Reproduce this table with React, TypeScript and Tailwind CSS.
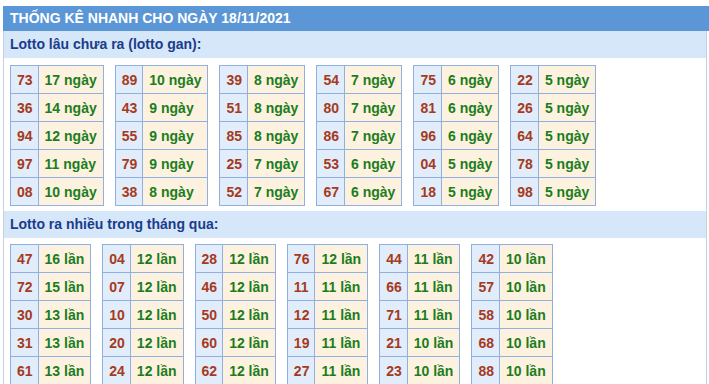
import React from 'react';

type Row = [string, string];

const ganTables: Row[][] = [
  [['73', '17'], ['36', '14'], ['94', '12'], ['97', '11'], ['08', '10']],
  [['89', '10'], ['43', '9'], ['55', '9'], ['79', '9'], ['38', '8']],
  [['39', '8'], ['51', '8'], ['85', '8'], ['25', '7'], ['52', '7']],
  [['54', '7'], ['80', '7'], ['86', '7'], ['53', '6'], ['67', '6']],
  [['75', '6'], ['81', '6'], ['96', '6'], ['04', '5'], ['18', '5']],
  [['22', '5'], ['26', '5'], ['64', '5'], ['78', '5'], ['98', '5']],
];

const nhieuTables: Row[][] = [
  [['47', '16'], ['72', '15'], ['30', '13'], ['31', '13'], ['61', '13']],
  [['04', '12'], ['07', '12'], ['10', '12'], ['20', '12'], ['24', '12']],
  [['28', '12'], ['46', '12'], ['50', '12'], ['60', '12'], ['62', '12']],
  [['76', '12'], ['11', '11'], ['12', '11'], ['19', '11'], ['27', '11']],
  [['44', '11'], ['66', '11'], ['71', '11'], ['21', '10'], ['23', '10']],
  [['42', '10'], ['57', '10'], ['58', '10'], ['68', '10'], ['88', '10']],
];

const LottoTable: React.FC<{ rows: Row[]; unit: string }> = ({ rows, unit }) => (
  <table className="border-collapse">
    <tbody>
      {rows.map(([num, count]) => (
        <tr key={num}>
          <td className="border border-[#8fb0e0] bg-[#e1edfb] pl-[6px] pr-[5px] py-0 h-[28px] text-[#a63a1c] leading-none">
            {num}
          </td>
          <td className="border border-[#8fb0e0] bg-[#fdf2e0] pl-[6px] pr-[6px] py-0 h-[28px] text-[#1c7d1c] leading-none">
            {count} {unit}
          </td>
        </tr>
      ))}
    </tbody>
  </table>
);

const SectionTitle: React.FC<{ children: React.ReactNode }> = ({ children }) => (
  <div className="h-[27px] bg-[#d5e7f9] flex items-center pl-[6px] text-[#1b3c8c]">
    {children}
  </div>
);

const App: React.FC = () => {
  return (
    <div className="w-[709px] h-[384px] overflow-hidden bg-white pt-[6px] pl-[3px] font-['Liberation_Sans',Arial,sans-serif] text-[14px] font-bold">
      {/* Header */}
      <div className="w-[706px] h-[25px] bg-[#5b96d6] flex items-center pl-[7px] text-white">
        THỐNG KÊ NHANH CHO NGÀY 18/11/2021
      </div>

      <div className="w-[704px] border-x border-[#c7d0df] pb-4">
        <SectionTitle>Lotto lâu chưa ra (lotto gan):</SectionTitle>
        <div className="flex gap-[11px] pl-[6px] mt-[7px]">
          {ganTables.map((t, i) => (
            <LottoTable key={i} rows={t} unit="ngày" />
          ))}
        </div>

        <div className="mt-[5px]">
          <SectionTitle>Lotto ra nhiều trong tháng qua:</SectionTitle>
        </div>
        <div className="flex gap-[11px] pl-[6px] mt-[6px]">
          {nhieuTables.map((t, i) => (
            <LottoTable key={i} rows={t} unit="lần" />
          ))}
        </div>
      </div>
    </div>
  );
};

export default App;
